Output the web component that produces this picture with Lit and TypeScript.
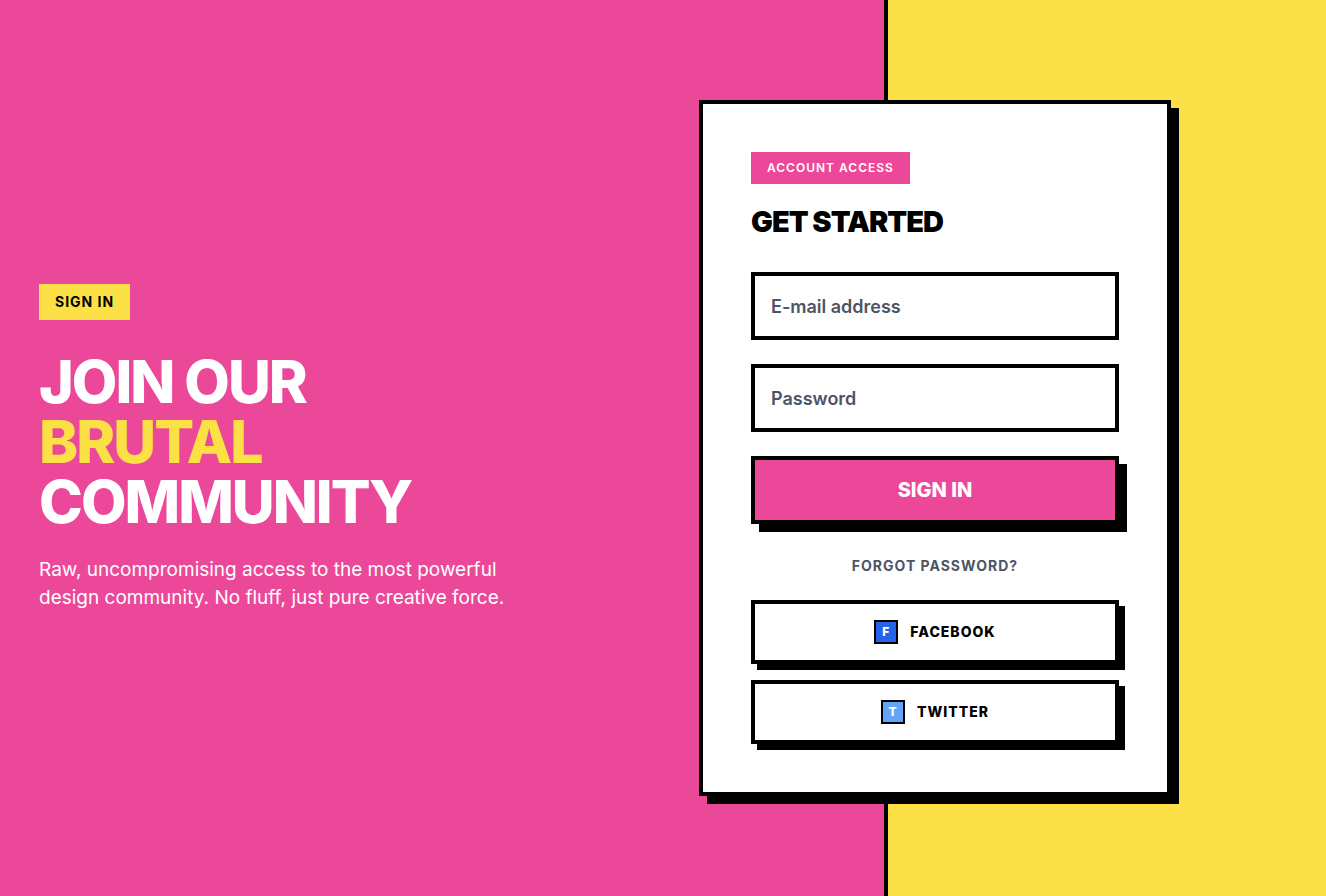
import { LitElement, html, css } from "lit";
import { customElement } from "lit/decorators.js";

@customElement("app-root")
export class AppRoot extends LitElement {
  static styles = css`
    *, *::before, *::after { box-sizing: border-box; }
    :host {
      --pink: #ec4899;
      --yellow: #fbe046;
      --ink: #000;
      display: block;
      font-family: Inter, "Liberation Sans", sans-serif;
      line-height: 24px;
      color: var(--ink);
    }
    .page {
      display: grid;
      grid-template-columns: 2fr 1fr;
      min-height: 100vh;
      background: var(--pink);
    }
    .page > * { grid-row: 1; min-width: 0; }
    .stripe {
      grid-column: 2;
      background: var(--yellow);
      border-left: 4px solid var(--ink);
    }
    .content {
      grid-column: 1 / -1;
      display: grid;
      grid-template-columns: 1fr 1fr;
      gap: 72px;
      align-items: center;
      width: 100%;
      max-width: 1280px;
      margin: 0 auto;
      padding: 16px;
      z-index: 1;
    }
    .tag {
      display: inline-block;
      padding: 8px 16px;
      font-size: 14px;
      line-height: 20px;
      font-weight: 700;
      letter-spacing: 1px;
      background: var(--yellow);
      text-transform: uppercase;
    }
    .tag.small {
      font-size: 12px;
      line-height: 16px;
      font-weight: 600;
      color: #fff;
      background: var(--pink);
    }
    h1, h2, p { margin: 0; }
    h1 {
      margin-top: 32px;
      font-size: 59px;
      line-height: 60px;
      font-weight: 800;
      letter-spacing: -2px;
      color: #fff;
    }
    h1 span { display: block; }
    .accent { color: var(--yellow); }
    .lead {
      max-width: 512px;
      margin-top: 24px;
      font-size: 19px;
      line-height: 28px;
      font-weight: 400;
      color: #fff;
    }
    .card {
      width: 100%;
      max-width: 472px;
      padding: 48px;
      background: #fff;
      border: 4px solid var(--ink);
      box-shadow: 8px 8px 0 var(--ink);
    }
    h2 {
      margin: 20px 0 32px;
      font-size: 29px;
      line-height: 36px;
      font-weight: 900;
      letter-spacing: -1px;
    }
    form, .social { display: grid; }
    form { gap: 24px; }
    .social { gap: 16px; margin-top: 24px; }
    input, button { font: inherit; border: 4px solid var(--ink); border-radius: 0; width: 100%; margin: 0; }
    input {
      padding: 16px;
      font-size: 18px;
      line-height: 28px;
      height: 68px;
      font-weight: 600;
      background: #fff;
      color: var(--ink);
    }
    input::placeholder { color: #4b5563; opacity: 1; }
    button { cursor: pointer; text-transform: uppercase; }
    .submit {
      padding: 16px;
      font-size: 20px;
      line-height: 28px;
      font-weight: 800;
      color: #fff;
      background: var(--pink);
      box-shadow: 8px 8px 0 var(--ink);
    }
    .forgot {
      justify-self: center;
      margin: 8px 0 0;
      font-size: 14px;
      line-height: 20px;
      font-weight: 700;
      letter-spacing: 1px;
      color: #4b5563;
      text-decoration: none;
    }
    .provider {
      display: flex;
      align-items: center;
      justify-content: center;
      gap: 12px;
      padding: 16px;
      font-size: 14px;
      line-height: 24px;
      font-weight: 800;
      letter-spacing: 1px;
      color: var(--ink);
      background: #fff;
      box-shadow: 6px 6px 0 var(--ink);
    }
    .badge {
      width: 24px;
      height: 24px;
      border: 2px solid var(--ink);
      font-size: 12px;
      line-height: 20px;
      color: #fff;
      background: #2563eb;
    }
    .badge.sky { background: #60a5fa; }
    @media (max-width: 800px) {
      .content { grid-template-columns: 1fr; }
      .card { justify-self: center; }
    }
  `;

  render() {
    return html`
      <main class="page">
        <div class="stripe"></div>
        <div class="content">
          <section>
            <span class="tag">Sign in</span>
            <h1>
              <span>JOIN OUR</span>
              <span class="accent">BRUTAL</span>
              <span>COMMUNITY</span>
            </h1>
            <p class="lead">
              Raw, uncompromising access to the most powerful design community. No fluff, just pure creative force.
            </p>
          </section>
          <section class="card">
            <span class="tag small">Account access</span>
            <h2>GET STARTED</h2>
            <form @submit=${(e: Event) => e.preventDefault()}>
              <input type="email" placeholder="E-mail address" aria-label="E-mail address" />
              <input type="password" placeholder="Password" aria-label="Password" />
              <button class="submit" type="submit">Sign in</button>
              <a class="forgot" href="#">FORGOT PASSWORD?</a>
            </form>
            <div class="social">
              <button class="provider" type="button"><span class="badge">F</span>Facebook</button>
              <button class="provider" type="button"><span class="badge sky">T</span>Twitter</button>
            </div>
          </section>
        </div>
      </main>
    `;
  }
}
